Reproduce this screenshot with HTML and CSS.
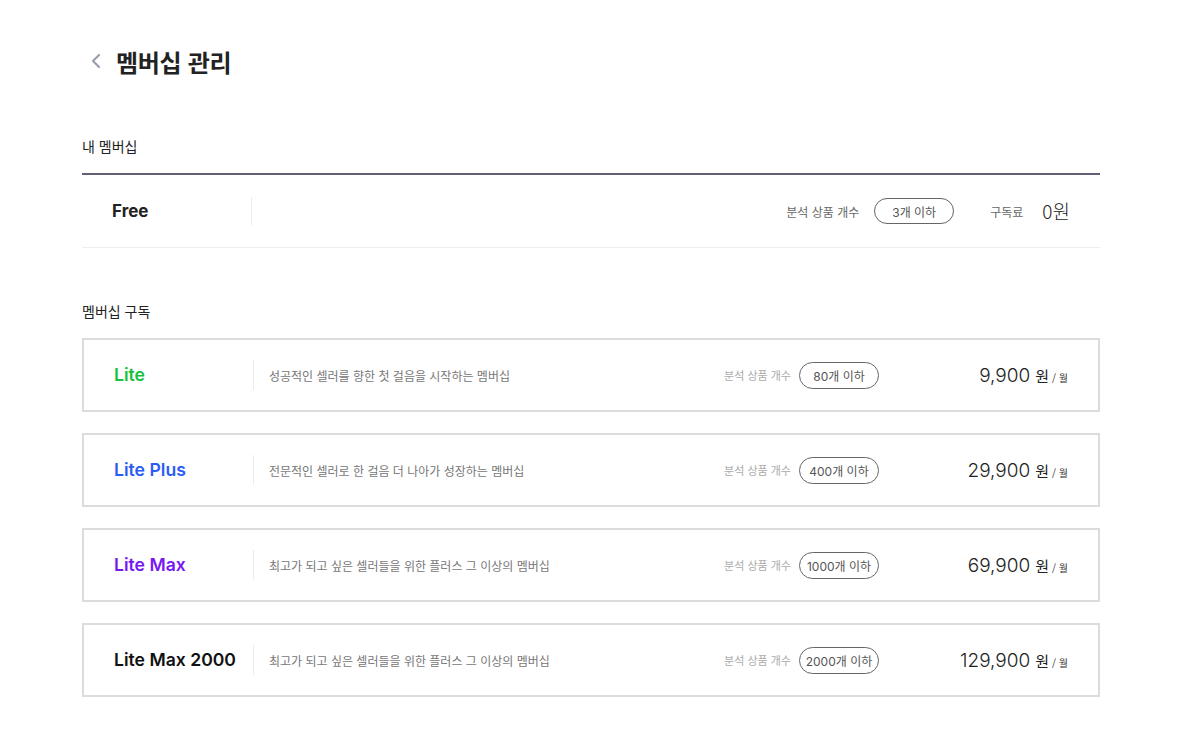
FILE: index.html
```html
<!DOCTYPE html>
<html lang="ko">
<head>
<meta charset="utf-8">
<link rel="stylesheet" href="styles.css">
</head>
<body>
<div class="page">
  <header class="header">
    <svg class="back" width="12" height="16" viewBox="0 0 12 16"><path d="M9 2 L3 8 L9 14" fill="none" stroke="#9a9fb0" stroke-width="2.2" stroke-linecap="round" stroke-linejoin="round"/></svg>
    <h1 class="title">멤버십 관리</h1>
  </header>

  <section class="mine">
    <div class="section-label">내 멤버십</div>
    <div class="mine-row">
      <div class="mine-name">Free</div>
      <div class="mine-info">
        <span class="mine-label">분석 상품 개수</span>
        <span class="pill pill-mine">3개 이하</span>
        <span class="mine-label fee">구독료</span>
        <span class="mine-price">0원</span>
      </div>
    </div>
  </section>

  <section class="subs">
    <div class="section-label">멤버십 구독</div>
    <div class="card">
      <div class="card-name lite">Lite</div>
      <div class="card-desc">성공적인 셀러를 향한 첫 걸음을 시작하는 멤버십</div>
      <span class="card-label">분석 상품 개수</span>
      <span class="pill">80개 이하</span>
      <div class="price"><span class="amount">9,900</span><span class="won">원</span><span class="per">/ 월</span></div>
    </div>
    <div class="card">
      <div class="card-name plus">Lite Plus</div>
      <div class="card-desc">전문적인 셀러로 한 걸음 더 나아가 성장하는 멤버십</div>
      <span class="card-label">분석 상품 개수</span>
      <span class="pill">400개 이하</span>
      <div class="price"><span class="amount">29,900</span><span class="won">원</span><span class="per">/ 월</span></div>
    </div>
    <div class="card">
      <div class="card-name max">Lite Max</div>
      <div class="card-desc">최고가 되고 싶은 셀러들을 위한 플러스 그 이상의 멤버십</div>
      <span class="card-label">분석 상품 개수</span>
      <span class="pill">1000개 이하</span>
      <div class="price"><span class="amount">69,900</span><span class="won">원</span><span class="per">/ 월</span></div>
    </div>
    <div class="card">
      <div class="card-name max2000">Lite Max 2000</div>
      <div class="card-desc">최고가 되고 싶은 셀러들을 위한 플러스 그 이상의 멤버십</div>
      <span class="card-label">분석 상품 개수</span>
      <span class="pill">2000개 이하</span>
      <div class="price"><span class="amount">129,900</span><span class="won">원</span><span class="per">/ 월</span></div>
    </div>
  </section>
</div>
</body>
</html>
```

FILE: styles.css
```css
* { box-sizing: border-box; }
html, body { margin: 0; padding: 0; background: #fff; }
body {
  font-family: Inter, "Noto Sans CJK KR", sans-serif;
  color: #222;
}
.page {
  width: 1018px;
  margin-left: 82px;
}
.header {
  display: flex;
  align-items: center;
  height: 64px;
  margin-top: 29px;
}
.back { margin-left: 8px; margin-right: 14px; }
.title {
  margin: 0;
  font-family: "Noto Sans CJK KR", sans-serif;
  font-size: 24px;
  font-weight: 700;
  color: #222;
  letter-spacing: -0.3px;
}
.section-label {
  font-family: "Noto Sans CJK KR", sans-serif;
  font-size: 14px;
  color: #222;
  line-height: 20px;
}
.mine { margin-top: 43px; }
.mine .section-label { padding-bottom: 17px; border-bottom: 2px solid #5f6074; }
.mine-row {
  display: flex;
  align-items: center;
  height: 73px;
  border-bottom: 1px solid #eeeeee;
}
.mine-name {
  width: 170px;
  padding-left: 30px;
  font-size: 17px;
  font-weight: 700;
  color: #222;
  border-right: 1px solid #ececec;
  line-height: 28px;
}
.mine-info {
  flex: 1;
  display: flex;
  align-items: center;
  justify-content: flex-end;
  padding-right: 30px;
}
.mine-label {
  font-family: "Noto Sans CJK KR", sans-serif;
  font-size: 12px;
  color: #666;
}
.mine-label.fee { margin-left: 36px; }
.mine-price {
  margin-left: 19px;
  font-family: "Noto Sans CJK KR", sans-serif;
  font-size: 19px;
  font-weight: 300;
  color: #222;
  position: relative;
  top: -1px;
}
.pill {
  display: inline-flex;
  align-items: center;
  justify-content: center;
  width: 80px;
  height: 27px;
  border: 1px solid #666;
  border-radius: 14px;
  font-family: Inter, "Noto Sans CJK KR", sans-serif;
  font-size: 12px;
  color: #555;
  margin-left: 8px;
}
.pill-mine { height: 26px; margin-left: 15px; }
.subs { margin-top: 53px; }
.subs .section-label { margin-bottom: 17px; }
.card {
  display: flex;
  align-items: center;
  height: 74px;
  border: 2px solid #dcdcdc;
  margin-bottom: 21px;
  padding-right: 30px;
}
.card-name {
  width: 170px;
  padding-left: 30px;
  font-size: 17.6px;
  font-weight: 600;
  line-height: 30px;
  border-right: 1px solid #ececec;
}
.lite { color: #14c23c; }
.plus { color: #2a5cf5; }
.max { color: #7718f3; }
.max2000 { color: #111; }
.card-desc {
  flex: 1;
  padding-left: 15px;
  font-family: "Noto Sans CJK KR", sans-serif;
  font-size: 12px;
  color: #777;
}
.card-label {
  font-family: "Noto Sans CJK KR", sans-serif;
  font-size: 11px;
  color: #aaa;
}
.price {
  width: 189px;
  display: flex;
  align-items: baseline;
  justify-content: flex-end;
}
.amount {
  font-size: 19px;
  font-weight: 300;
  color: #222;
}
.won {
  margin-left: 5px;
  font-family: "Noto Sans CJK KR", sans-serif;
  font-size: 15px;
  color: #222;
}
.per {
  margin-left: 3px;
  font-family: "Noto Sans CJK KR", sans-serif;
  font-size: 10px;
  color: #333;
}
```
